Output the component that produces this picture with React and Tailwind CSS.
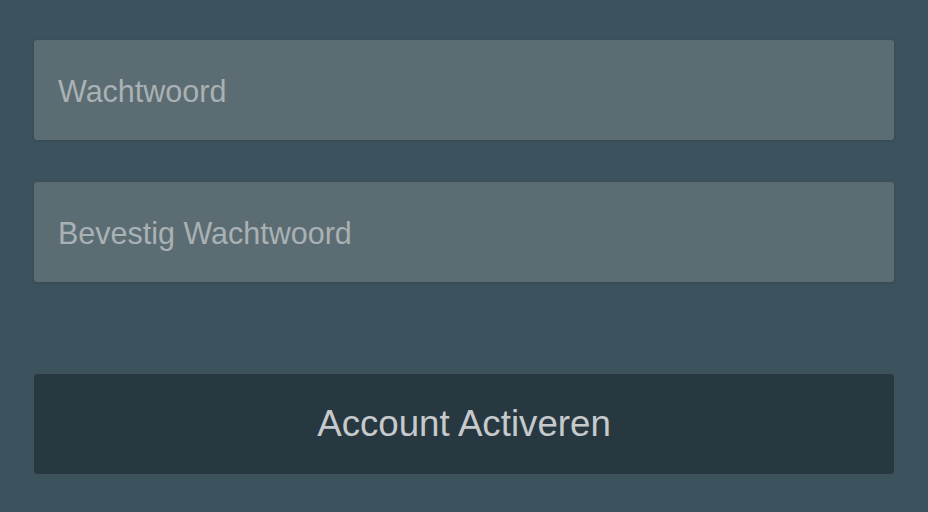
import React from 'react';

const Field = ({ placeholder, type = 'password' }) => (
  <input
    type={type}
    placeholder={placeholder}
    className="block w-full h-[100px] rounded-[3px] bg-[#5b6d73] px-6 pt-[3px] text-[30.5px] text-[#c9ced0] placeholder:text-[#aab1b4] outline-none shadow-[0_1px_4px_rgba(0,0,0,0.12)]"
  />
);

const App = () => {
  return (
    <div className="min-h-screen w-full bg-[#3c525d] px-[34px] pt-[40px] font-['Liberation_Sans',Arial,sans-serif]">
      <form className="flex flex-col" onSubmit={e => e.preventDefault()}>
        <Field placeholder="Wachtwoord" />
        <div className="mt-[42px]">
          <Field placeholder="Bevestig Wachtwoord" />
        </div>
        <button
          type="submit"
          className="mt-[92px] h-[100px] w-full rounded-[3px] bg-[#283840] text-[36.7px] text-[#c6cacc]"
        >
          Account Activeren
        </button>
      </form>
    </div>
  );
};

export default App;
